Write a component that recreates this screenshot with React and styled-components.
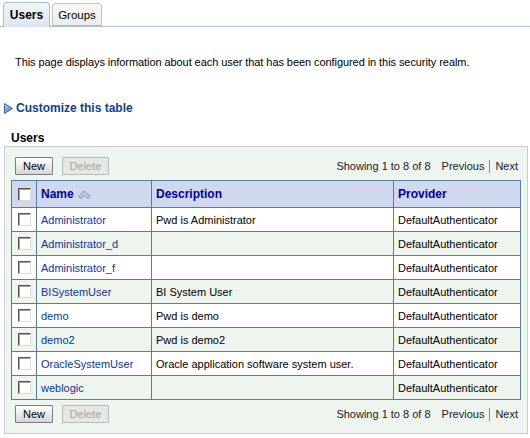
import * as React from 'react'
import styled, { createGlobalStyle } from 'styled-components'

const GlobalStyle = createGlobalStyle`
  html, body {
    margin: 0;
    padding: 0;
    background: #ffffff;
  }
  body {
    font-family: Tahoma, "Liberation Sans", Arial, sans-serif;
    font-size: 11px;
    color: #000000;
  }
`

const Page = styled.div`
  width: 530px;
  height: 438px;
  overflow: hidden;
`

// tabs
const TabBar = styled.div`
  display: flex;
  align-items: flex-end;
  gap: 2px;
  height: 24px;
  padding: 2px 0 0 3px;
  border-bottom: 1px solid #a9bfd6;
`

const Tab = styled.div`
  display: flex;
  align-items: center;
  justify-content: center;
  box-sizing: border-box;
  height: ${p => (p.$active ? '25px' : '23px')};
  margin-bottom: ${p => (p.$active ? '-1px' : '0')};
  width: ${p => (p.$active ? '47px' : '50px')};
  border: 1px solid ${p => (p.$active ? '#a9bfd6' : '#c4c4c4')};
  border-bottom: ${p => (p.$active ? 'none' : '1px solid #a9bfd6')};
  border-radius: 4px 4px 0 0;
  background: ${p =>
    p.$active
      ? 'linear-gradient(#f2f6fb, #dbe5f1)'
      : 'linear-gradient(#f8f8f8, #ececec)'};
  font-weight: ${p => (p.$active ? 'bold' : 'normal')};
  font-size: ${p => (p.$active ? '12px' : '11.5px')};
  color: #000;
`

const Intro = styled.p`
  margin: 28px 0 0 0;
  padding-left: 15px;
  line-height: 14px;
  letter-spacing: -0.07px;
`

const Customize = styled.div`
  display: flex;
  align-items: center;
  gap: 3px;
  margin-top: 32px;
  padding-left: 4px;
  line-height: 14px;
  font-size: 12px;
  font-weight: bold;
  color: #0f3f8c;
`

const Heading = styled.div`
  margin-top: 16px;
  padding-left: 11px;
  line-height: 14px;
  font-size: 12px;
  font-weight: bold;
`

const Panel = styled.div`
  margin: 1px 2px 0 4px;
  padding: 10px 6px 10px 6px;
  border: 1px solid #c8cec8;
  background: #eef4ee;
`

const Toolbar = styled.div`
  display: flex;
  align-items: center;
  justify-content: space-between;
  height: 18px;
  padding: 0 3px 0 4px;
  margin: ${p => (p.$bottom ? '5px 0 0 0' : '0 0 5px 0')};
`

const Buttons = styled.div`
  display: flex;
  gap: 9px;
`

const Button = styled.button`
  box-sizing: border-box;
  height: 18px;
  padding: 0 6px;
  font-family: inherit;
  font-size: 11px;
  line-height: 14px;
  border: 1px solid ${p => (p.disabled ? '#b5bab5' : '#7c7c7c')};
  background: ${p =>
    p.disabled ? '#e3e8e3' : 'linear-gradient(#ffffff, #d6d6d6)'};
  color: ${p => (p.disabled ? '#a3a7a3' : '#000')};
  min-width: ${p => (p.$wide ? '47px' : '38px')};
  border-radius: 1px;
`

const Pager = styled.div`
  display: flex;
  align-items: center;
  color: #222;
`

const PagerLink = styled.span`
  padding: 0 5px;
  border-left: ${p => (p.$sep ? '1px solid #8a8a8a' : 'none')};
  line-height: 13px;
  padding-right: ${p => (p.$last ? '0' : '5px')};
`

const Table = styled.table`
  width: 100%;
  table-layout: fixed;
  border-collapse: collapse;
  border: 1px solid #5a7d98;
`

const HeadCell = styled.th`
  height: 26px;
  padding: 0 0 0 4px;
  text-align: left;
  background: #cfd8ef;
  border: 1px solid #5a7d98;
  color: #000099;
  font-weight: bold;
  font-size: 12px;
`

const Row = styled.tr`
  background: ${p => (p.$alt ? '#eef4ee' : '#ffffff')};
`

const Cell = styled.td`
  height: 23px;
  padding: 0 0 0 4px;
  border: 1px solid #5a7d98;
  white-space: nowrap;
  overflow: hidden;
`

const BoxCell = styled.td`
  height: 23px;
  padding: 0;
  text-align: center;
  border: 1px solid #5a7d98;
`

const BoxHead = styled(BoxCell).attrs({ as: 'th' })`
  height: 26px;
  background: #cfd8ef;
`

const Check = styled.span`
  display: inline-block;
  vertical-align: middle;
  box-sizing: border-box;
  width: 13px;
  height: 13px;
  background: #fff;
  border: 1px solid;
  border-color: #555 #dcdcdc #dcdcdc #555;
  box-shadow: inset 1px 1px 0 #a0a0a0;
`

const Link = styled.span`
  color: #0a3696;
`

const HeadLabel = styled.span`
  display: inline-flex;
  align-items: center;
  gap: 4px;
`

const SortIcon = () => (
  <svg width="13" height="9" viewBox="0 0 13 9">
    <polygon
      points="1,6.5 6.5,1 12,6.5 10,8.5 6.5,5 3,8.5"
      fill="#c9d3e6"
      stroke="#6f84a8"
      strokeWidth="1"
    />
  </svg>
)

const Triangle = () => (
  <svg width="9" height="11" viewBox="0 0 9 11">
    <defs>
      <linearGradient id="tri" x1="0" y1="0" x2="1" y2="1">
        <stop offset="0" stopColor="#c3d5ef" />
        <stop offset="1" stopColor="#3c68b0" />
      </linearGradient>
    </defs>
    <polygon points="0.5,0.5 8.5,5.5 0.5,10.5" fill="url(#tri)" stroke="#3e67a9" />
  </svg>
)

const users = [
  { name: 'Administrator', description: 'Pwd is Administrator' },
  { name: 'Administrator_d', description: '' },
  { name: 'Administrator_f', description: '' },
  { name: 'BISystemUser', description: 'BI System User' },
  { name: 'demo', description: 'Pwd is demo' },
  { name: 'demo2', description: 'Pwd is demo2' },
  { name: 'OracleSystemUser', description: 'Oracle application software system user.' },
  { name: 'weblogic', description: '' }
]

const TableToolbar = ({ bottom }) => (
  <Toolbar $bottom={bottom}>
    <Buttons>
      <Button>New</Button>
      <Button disabled $wide>
        Delete
      </Button>
    </Buttons>
    <Pager>
      <span>Showing 1 to 8 of 8</span>
      <PagerLink style={{ marginLeft: 6 }}>Previous</PagerLink>
      <PagerLink $sep $last>
        Next
      </PagerLink>
    </Pager>
  </Toolbar>
)

export default function App() {
  return (
    <Page>
      <GlobalStyle />
      <TabBar>
        <Tab $active>Users</Tab>
        <Tab>Groups</Tab>
      </TabBar>

      <Intro>
        This page displays information about each user that has been configured in this
        security realm.
      </Intro>

      <Customize>
        <Triangle />
        Customize this table
      </Customize>

      <Heading>Users</Heading>

      <Panel>
        <TableToolbar />
        <Table>
          <colgroup>
            <col style={{ width: 25 }} />
            <col style={{ width: 115 }} />
            <col style={{ width: 242 }} />
            <col />
          </colgroup>
          <thead>
            <tr>
              <BoxHead>
                <Check />
              </BoxHead>
              <HeadCell>
                <HeadLabel>
                  Name <SortIcon />
                </HeadLabel>
              </HeadCell>
              <HeadCell>Description</HeadCell>
              <HeadCell>Provider</HeadCell>
            </tr>
          </thead>
          <tbody>
            {users.map((u, i) => (
              <Row key={u.name} $alt={i % 2 === 1}>
                <BoxCell>
                  <Check />
                </BoxCell>
                <Cell>
                  <Link>{u.name}</Link>
                </Cell>
                <Cell>{u.description}</Cell>
                <Cell>DefaultAuthenticator</Cell>
              </Row>
            ))}
          </tbody>
        </Table>
        <TableToolbar bottom />
      </Panel>
    </Page>
  )
}
